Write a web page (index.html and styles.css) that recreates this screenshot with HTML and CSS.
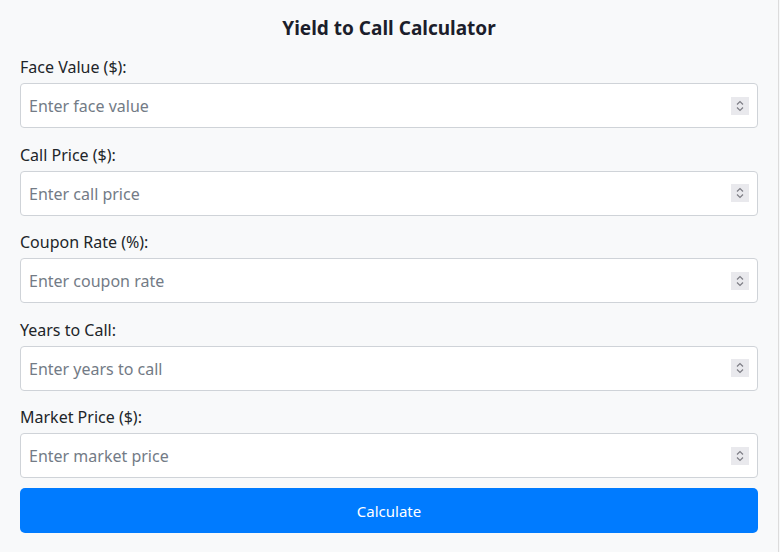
FILE: index.html
```html
<!DOCTYPE html>
<html lang="en">
<head>
<meta charset="utf-8">
<title>Yield to Call Calculator</title>
<link rel="stylesheet" href="styles.css">
</head>
<body>
<div class="calc">
  <h2 class="title">Yield to Call Calculator</h2>
  <div class="group">
    <label class="label" for="fv">Face Value ($):</label>
    <div class="wrap">
      <input class="field" id="fv" type="number" placeholder="Enter face value">
      <span class="spin"><svg viewBox="0 0 18 18" width="18" height="18"><path d="M6 7.5 9 4.5 12 7.5M6 10.5 9 13.5 12 10.5" fill="none" stroke="#7d7d85" stroke-width="1.2"/></svg></span>
    </div>
  </div>
  <div class="group">
    <label class="label" for="cp">Call Price ($):</label>
    <div class="wrap">
      <input class="field" id="cp" type="number" placeholder="Enter call price">
      <span class="spin"><svg viewBox="0 0 18 18" width="18" height="18"><path d="M6 7.5 9 4.5 12 7.5M6 10.5 9 13.5 12 10.5" fill="none" stroke="#7d7d85" stroke-width="1.2"/></svg></span>
    </div>
  </div>
  <div class="group">
    <label class="label" for="cr">Coupon Rate (%):</label>
    <div class="wrap">
      <input class="field" id="cr" type="number" placeholder="Enter coupon rate">
      <span class="spin"><svg viewBox="0 0 18 18" width="18" height="18"><path d="M6 7.5 9 4.5 12 7.5M6 10.5 9 13.5 12 10.5" fill="none" stroke="#7d7d85" stroke-width="1.2"/></svg></span>
    </div>
  </div>
  <div class="group">
    <label class="label" for="yc">Years to Call:</label>
    <div class="wrap">
      <input class="field" id="yc" type="number" placeholder="Enter years to call">
      <span class="spin"><svg viewBox="0 0 18 18" width="18" height="18"><path d="M6 7.5 9 4.5 12 7.5M6 10.5 9 13.5 12 10.5" fill="none" stroke="#7d7d85" stroke-width="1.2"/></svg></span>
    </div>
  </div>
  <div class="group last">
    <label class="label" for="mp">Market Price ($):</label>
    <div class="wrap">
      <input class="field" id="mp" type="number" placeholder="Enter market price">
      <span class="spin"><svg viewBox="0 0 18 18" width="18" height="18"><path d="M6 7.5 9 4.5 12 7.5M6 10.5 9 13.5 12 10.5" fill="none" stroke="#7d7d85" stroke-width="1.2"/></svg></span>
    </div>
  </div>
  <button class="btn" type="button">Calculate</button>
</div>
</body>
</html>
```
FILE: styles.css
```css
html, body {
  margin: 0;
  padding: 0;
  background: #f8f9fa;
}
body {
  font-family: "Noto Sans", "Open Sans", sans-serif;
  color: #212529;
}
.calc {
  width: 738px;
  padding: 16px 20px 19px;
  border-right: 1px solid #dcdcdc;
  box-sizing: content-box;
  min-height: 517px;
}
.title {
  margin: 0 0 16px;
  font-size: 19px;
  line-height: 24px;
  font-weight: 700;
  text-align: center;
  color: #1c1e2b;
}
.group {
  display: flex;
  flex-direction: column;
  margin-bottom: 15.5px;
}
.group.last {
  margin-bottom: 10px;
}
.label {
  font-size: 16px;
  line-height: 22px;
  margin-bottom: 5px;
}
.wrap {
  position: relative;
}
.field {
  display: block;
  box-sizing: border-box;
  height: 45px;
  width: 100%;
  padding: 1px 36px 0 8px;
  border: 1px solid #cfd3d8;
  border-radius: 4px;
  background: #fff;
  font-family: inherit;
  font-size: 16px;
  color: #212529;
  -moz-appearance: textfield;
}
.field::placeholder {
  color: #737b86;
}
.field::-webkit-inner-spin-button,
.field::-webkit-outer-spin-button {
  -webkit-appearance: none;
  margin: 0;
}
.spin {
  position: absolute;
  right: 9px;
  top: 50%;
  width: 18px;
  height: 18px;
  margin-top: -9px;
  background: #e9e9ed;
  pointer-events: none;
}
.spin svg {
  display: block;
}
.btn {
  display: block;
  width: 100%;
  height: 45px;
  border: 0;
  border-radius: 5px;
  background: #007bff;
  color: #fff;
  font-family: inherit;
  font-size: 15px;
}
```
